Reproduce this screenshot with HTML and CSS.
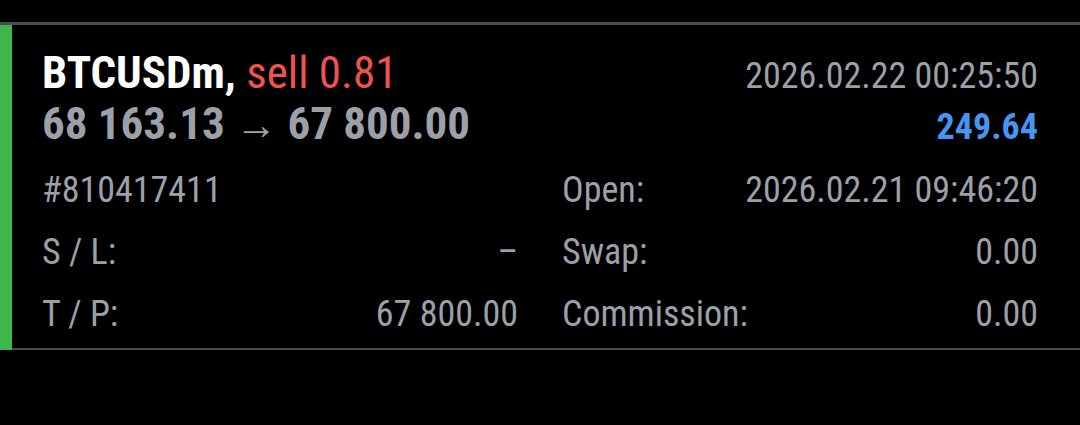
FILE: index.html
```html
<!DOCTYPE html>
<html lang="en">
<head>
<meta charset="utf-8">
<title>Position</title>
<link rel="stylesheet" href="styles.css">
</head>
<body>
<div class="list">
  <div class="card">
    <div class="bar"></div>
    <div class="body">
      <div class="head">
        <div class="title"><span class="sym">BTCUSDm,</span> <span class="side">sell 0.81</span></div>
        <div class="time">2026.02.22 00:25:50</div>
        <div class="prices">68 163.13 <span class="arrow">→</span> 67 800.00</div>
        <div class="profit">249.64</div>
      </div>
      <div class="rows">
        <div class="cell"><span>#810417411</span></div>
        <div class="cell"><span>Open:</span><span>2026.02.21 09:46:20</span></div>
        <div class="cell"><span>S / L:</span><span>–</span></div>
        <div class="cell"><span>Swap:</span><span>0.00</span></div>
        <div class="cell"><span>T / P:</span><span>67 800.00</span></div>
        <div class="cell"><span>Commission:</span><span>0.00</span></div>
      </div>
    </div>
  </div>
</div>
</body>
</html>
```
FILE: styles.css
```css
html, body {
  margin: 0;
  padding: 0;
  background: #000;
}
body {
  font-family: "Roboto Condensed", Roboto, sans-serif;
  color: #9ca0a8;
}
.list {
  margin-top: 22px;
  border-top: 3px solid #4a4c52;
}
.card {
  display: flex;
}
.bar {
  width: 12px;
  background: #3db64b;
  flex: none;
}
.body {
  flex: 1;
  padding: 22px 42px 3px 30px;
  border-bottom: 2px solid #4a4c52;
}
.head {
  display: grid;
  grid-template-columns: 1fr auto;
  align-items: baseline;
}
.title, .prices {
  font-size: 45px;
  line-height: 51px;
  font-weight: 700;
}
.sym { color: #ffffff; }
.side { color: #ef5350; font-weight: 400; }
.prices { color: #9ca0a8; }
.arrow { font-weight: 400; font-size: 42px; }
.time, .profit {
  font-size: 36px;
  text-align: right;
}
.time { color: #9ca0a8; }
.profit { color: #4596f2; font-weight: 700; }
.rows {
  margin-top: 9px;
  display: grid;
  grid-template-columns: 1fr 1fr;
  column-gap: 44px;
}
.cell {
  display: flex;
  justify-content: space-between;
  font-size: 36px;
  line-height: 62px;
}
```
